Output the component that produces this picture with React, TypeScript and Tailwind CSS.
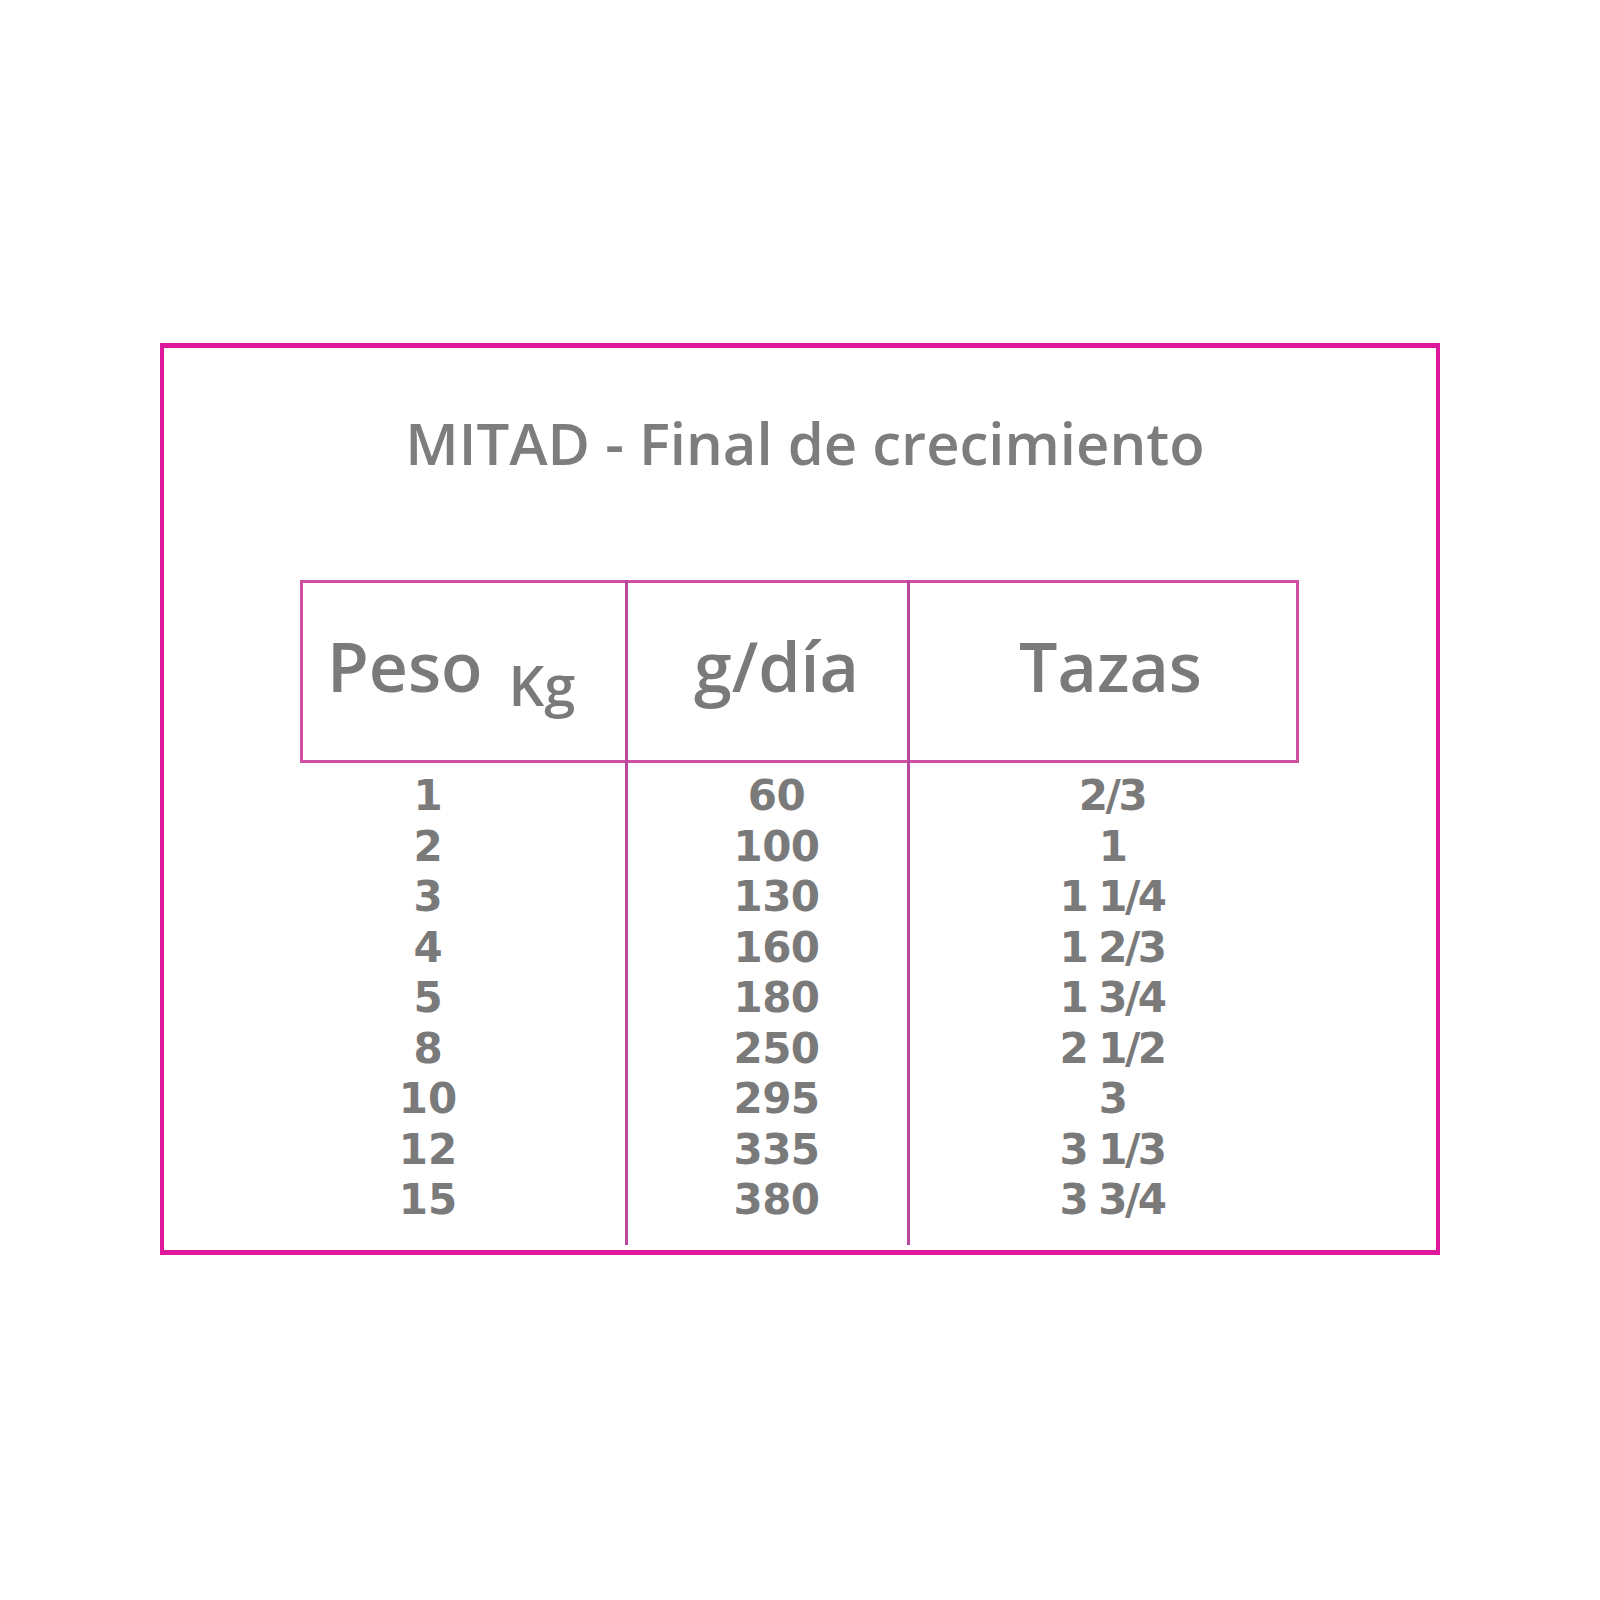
import React from "react";

const rows = [
  { kg: "1", g: "60", tazas: "2/3" },
  { kg: "2", g: "100", tazas: "1" },
  { kg: "3", g: "130", tazas: "1 1/4" },
  { kg: "4", g: "160", tazas: "1 2/3" },
  { kg: "5", g: "180", tazas: "1 3/4" },
  { kg: "8", g: "250", tazas: "2 1/2" },
  { kg: "10", g: "295", tazas: "3" },
  { kg: "12", g: "335", tazas: "3 1/3" },
  { kg: "15", g: "380", tazas: "3 3/4" },
];

const font = { fontFamily: '"Open Sans", "Liberation Sans", sans-serif' };
const digits = { fontFamily: '"DejaVu Sans", "Liberation Sans", sans-serif' };

export default function App() {
  return (
    <div className="w-[1600px] h-[1600px] bg-white pt-[343px] pl-[160px]" style={font}>
      <div className="w-[1280px] h-[912px] border-[#e0189e] border-l-[4px] border-r-[4px] border-t-[5px] border-b-[5px] flex flex-col">
        <h1 className="mt-[55px] pl-[10px] text-center text-[58px] leading-[80px] font-semibold text-[#7d7d7d]">
          MITAD - Final de crecimiento
        </h1>

        <div className="mt-[97px] ml-[136px] flex text-[#7a7a7a]">
          {/* Peso */}
          <div className="w-[328px] flex flex-col border-r-[3px] border-[#b9479c]">
            <div className="h-[183px] border-l-[3px] border-t-[3px] border-b-[3px] border-[#cf4fa2] flex items-center pl-[24px] pb-[12px]">
              <span className="text-[68px] font-semibold leading-none">Peso</span>
              <span className="text-[56px] font-semibold leading-none ml-[26px] mt-[36px]">Kg</span>
            </div>
            <div className="h-[482px] pt-[8px] w-[256px] text-center text-[42px] font-bold leading-[50.5px]" style={digits}>
              {rows.map((r) => (
                <div key={r.kg}>{r.kg}</div>
              ))}
            </div>
          </div>

          {/* g/dia */}
          <div className="w-[282px] flex flex-col border-r-[3px] border-[#b9479c]">
            <div className="h-[183px] border-t-[3px] border-b-[3px] border-[#cf4fa2] flex items-center justify-center pl-[18px] pb-[12px]">
              <span className="text-[68px] font-semibold leading-none">g/día</span>
            </div>
            <div className="h-[482px] pt-[8px] pl-[18px] text-center text-[42px] font-bold leading-[50.5px] tracking-[-0.5px]" style={digits}>
              {rows.map((r) => (
                <div key={r.kg}>{r.g}</div>
              ))}
            </div>
          </div>

          {/* Tazas */}
          <div className="w-[389px] flex flex-col">
            <div className="h-[183px] border-t-[3px] border-b-[3px] border-r-[3px] border-[#cf4fa2] flex items-center justify-center pl-[15px] pb-[12px]">
              <span className="text-[68px] font-semibold leading-none">Tazas</span>
            </div>
            <div className="h-[482px] pt-[8px] pl-[15px] text-center text-[42px] font-bold leading-[50.5px] tracking-[-2.5px]" style={digits}>
              {rows.map((r) => (
                <div key={r.kg}>{r.tazas}</div>
              ))}
            </div>
          </div>
        </div>
      </div>
    </div>
  );
}
